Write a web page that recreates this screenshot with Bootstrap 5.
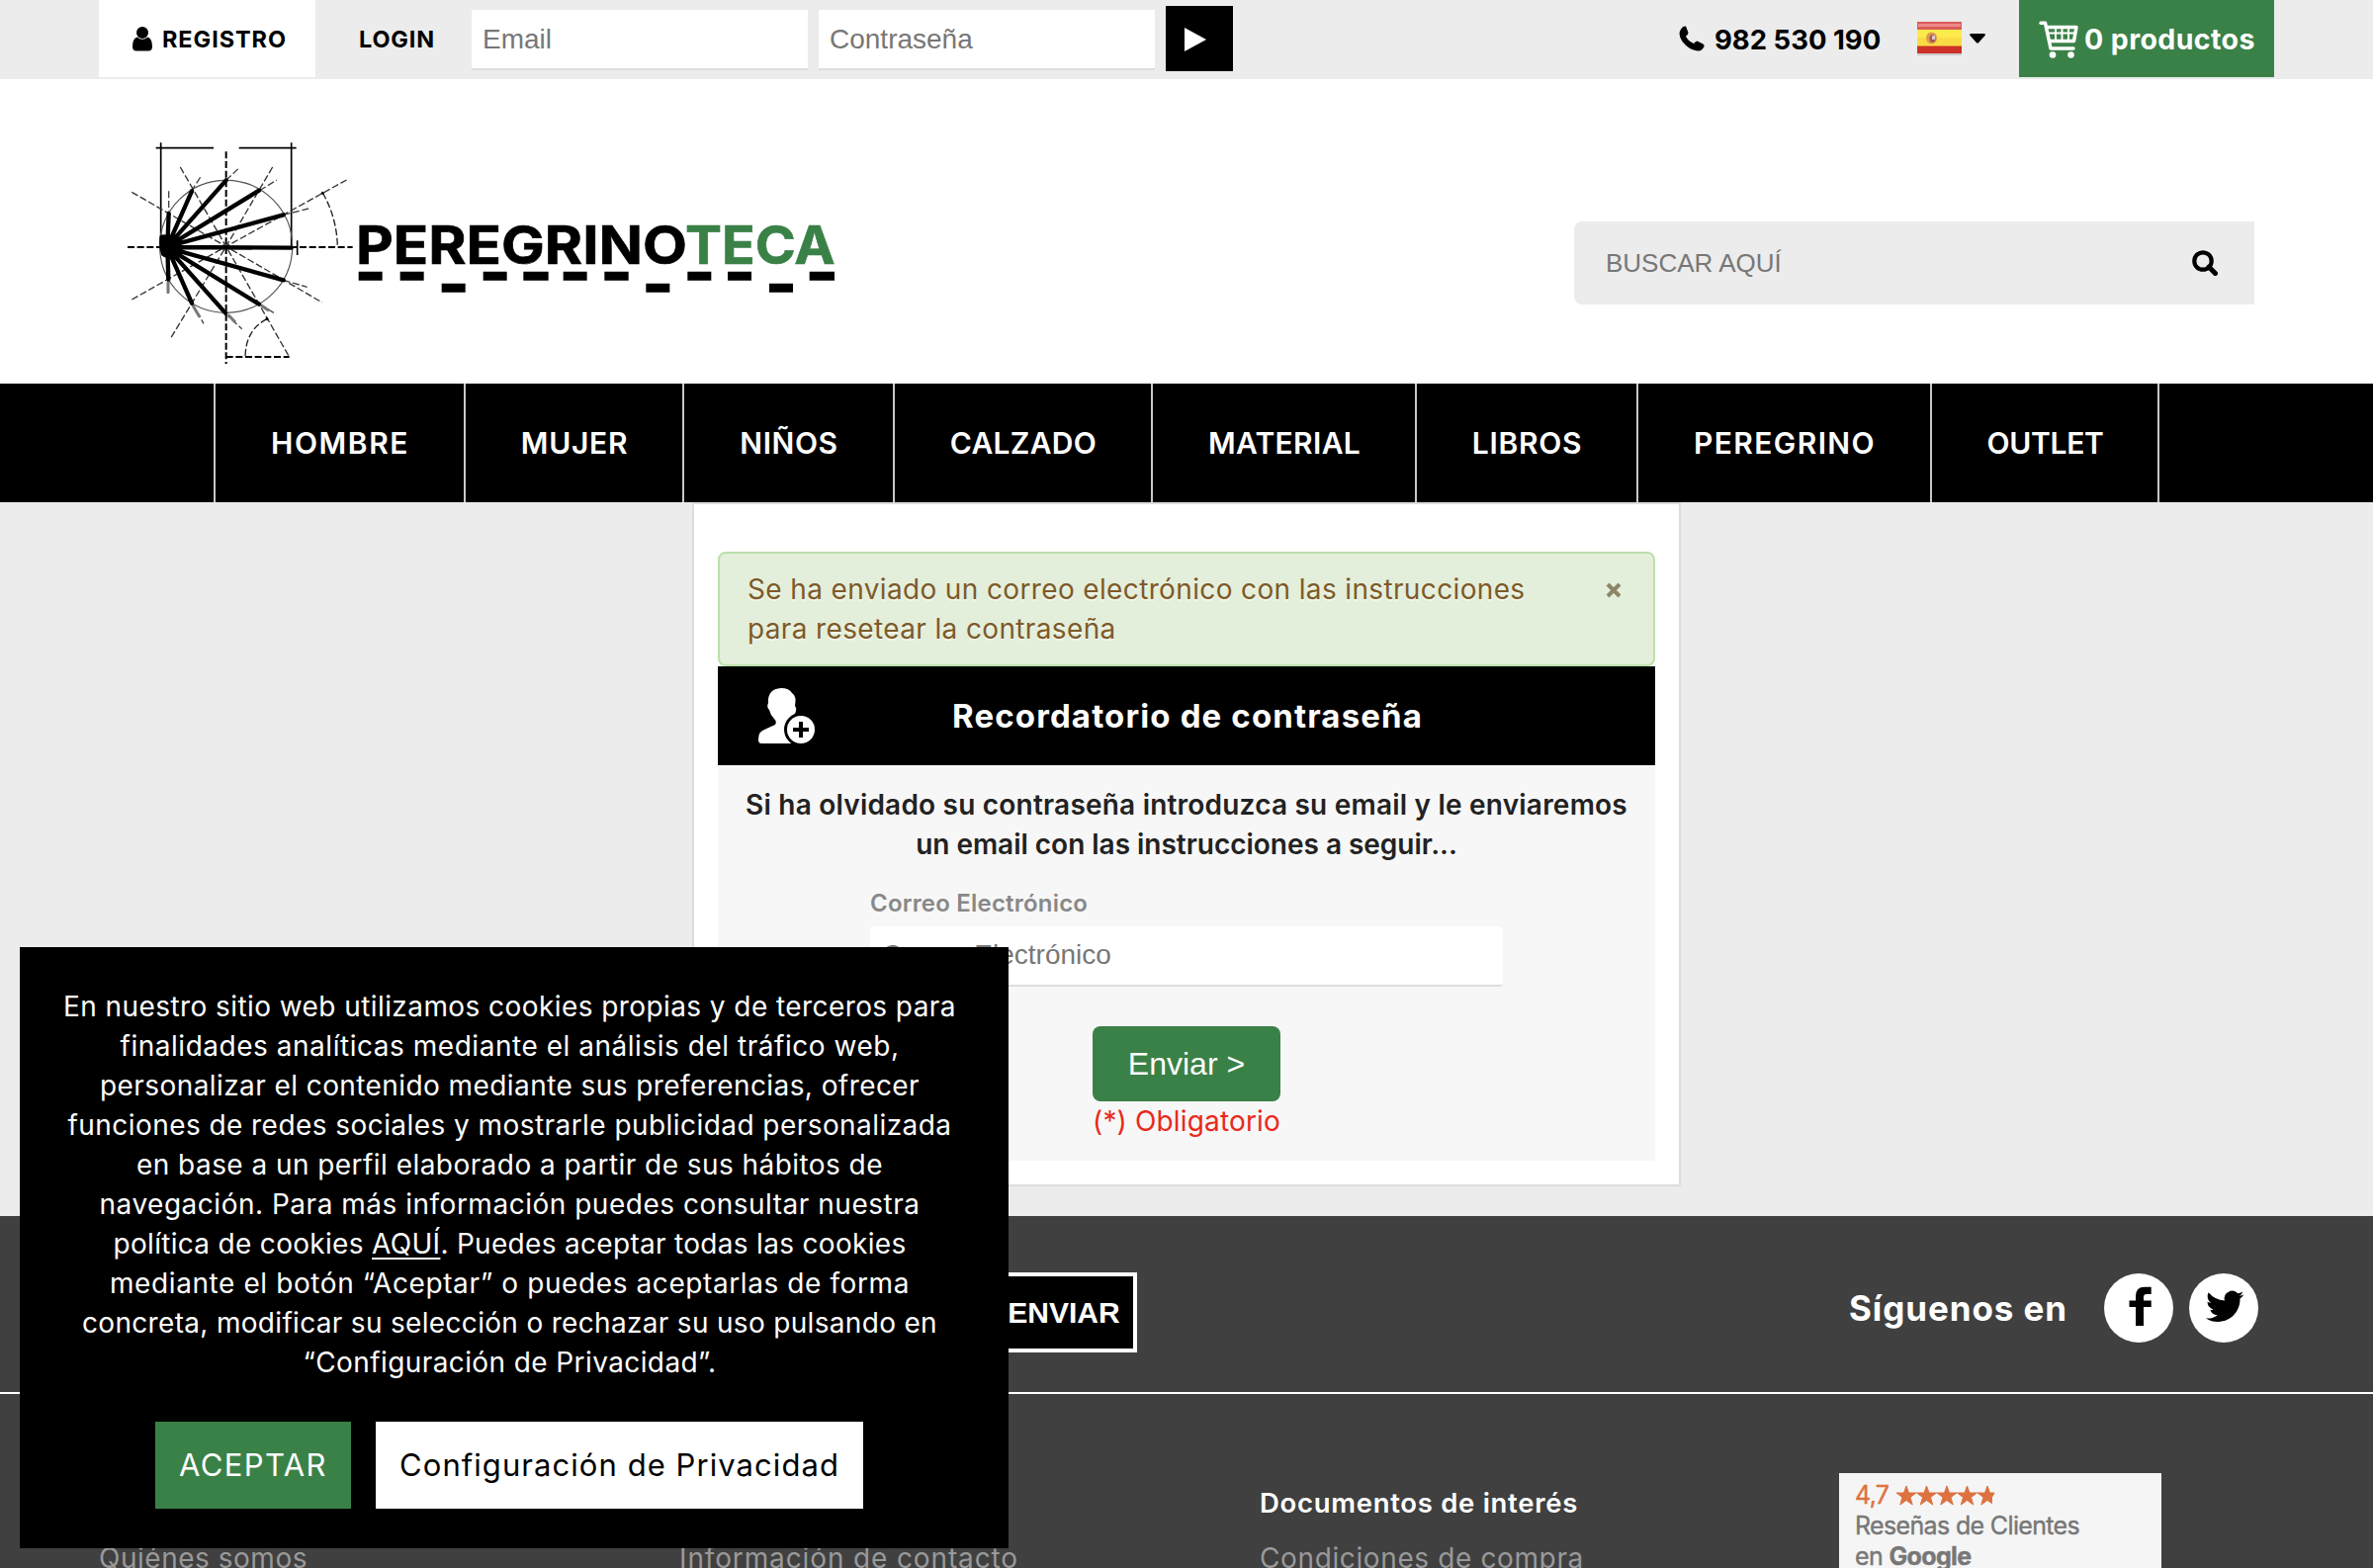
<!DOCTYPE html>
<html lang="es">
<head>
<meta charset="utf-8">
<title>Peregrinoteca</title>
<link href="https://cdn.jsdelivr.net/npm/bootstrap@5.3.0/dist/css/bootstrap.min.css" rel="stylesheet">
<style>
body{font-family:Inter,"Open Sans",sans-serif;font-size:28px;line-height:40px;background:#ececec;color:#000;height:1586px;overflow:hidden}
svg{flex:none;display:block}
.arial{font-family:"Liberation Sans",Arial,sans-serif}
.fit{white-space:nowrap;display:inline-block}
.topbar{height:80px;background:#ececec;padding:0 100px}
.registro{height:78px;width:219px;padding:2px 0 0 34px;font-size:23.5px;font-weight:700;letter-spacing:.93px}
.registro svg{margin:-2px 10px 0 0}
.login{font-size:23.5px;font-weight:700;height:80px;padding-left:44px;width:158px;letter-spacing:.82px}
.flat{height:61px;width:340px;border:0;border-bottom:2px solid #ddd;border-radius:0;font-size:28px;padding:0 11px;background:#fff;margin:10px 11px 0 0}
.form-control::placeholder{color:#777;opacity:1}
.go{width:68px;height:66px;background:#000;border:0;border-radius:0;margin-top:6px;padding:2px 0 0 19px}
.phone{font-size:27.5px;font-weight:700;width:169px;margin:2px 36px 0 10px}
.lang{width:69px;margin-right:34px;gap:8px}
.cart{height:78px;width:258px;background:#3a8147;color:#fff;font-size:28.5px;font-weight:700;padding:2px 0 0 20px;letter-spacing:.4px}
.cart svg{margin-right:6px}
.masthead{height:308px;background:#fff;padding:50px 120px 0 110px}
.searchbox{width:688px;height:84px;background:#ececec;border-radius:8px 0 0 8px;margin-top:94px;padding:0 37px 0 30px}
.searchbox input{background:none;border:0;font-size:26px;padding:0 2px;height:60px}
.mainnav{height:120px;background:#000;padding-left:216px}
.mainnav a{color:#fff;font-weight:600;font-size:30px;height:120px;padding-left:1px;border-right:2px solid #c8c8c8}
.mainnav a:first-child{border-left:2px solid #c8c8c8}
.mainnav a:nth-child(1){width:255px;letter-spacing:1.56px}
.mainnav a:nth-child(2){width:221px;letter-spacing:.7px}
.mainnav a:nth-child(3){width:213px;letter-spacing:.6px}
.mainnav a:nth-child(4){width:261px;letter-spacing:.3px}
.mainnav a:nth-child(5){width:267px;letter-spacing:.34px}
.mainnav a:nth-child(6){width:224px;letter-spacing:.7px}
.mainnav a:nth-child(7){width:297px;letter-spacing:1.39px}
.mainnav a:nth-child(8){width:230px;letter-spacing:-.3px}
.panelcard{width:1000px;height:692px;border:2px solid #ddd;background:#fff;border-radius:0;padding:48px 24px 0}
.notice{height:116px;margin:0;border:2px solid #bcdfab;border-radius:8px;background:#e3efda;color:#7d5a29;padding:16px 30px 0 28px;text-shadow:0 2px 0 rgba(255,255,255,.5);letter-spacing:.36px}
.notice svg{margin:13px 2px 0 0}
.cardtop{height:100px;background:#000;color:#fff;font-size:33px;font-weight:700;letter-spacing:1.14px}
.usericon{margin-left:41px;margin-right:138px}
.formarea{height:400px;background:#f7f7f7;padding:20px 0 0;color:#222;font-weight:600}
.lbl{font-size:24px;color:#888;line-height:30px;margin:25px 0 8px 154px;letter-spacing:.2px}
.mail{width:640px;height:61px;border:0;border-bottom:2px solid #ddd;border-radius:4px;font-size:28px;padding:0 12px 2px;margin-left:154px}
.send{width:190px;height:76px;background:#3a8147;color:#fff;font-size:32px;border:0;border-radius:8px;margin-top:40px;padding:0}
.req{color:#e8291c;font-weight:400;letter-spacing:.16px}
.foot{height:356px;background:#404040;margin-top:30px;color:#fff}
.footbar{height:180px;border-bottom:2px solid #fff;padding:0 116px 0 1001px}
.sub{width:149px;height:81px;margin-top:57px;background:#000;border:4px solid #fff;border-radius:0;color:#fff;font-weight:700;font-size:30px;padding:0 0 0 1px}
.follow{margin:58px 0 0 auto;height:70px;font-size:35px;font-weight:700;letter-spacing:.91px}
.fb{margin:0 16px 0 37px}
.disc{width:70px;height:70px;border-radius:50%;background:#fff}
.footcols{padding:80px 100px 0;display:grid;grid-template-columns:587px 587px 586px 326px}
.footcols h5{font-size:27.5px;line-height:40px;font-weight:600;margin:10px 0 16px;letter-spacing:.7px}
.footcols a{color:#999;text-decoration:none}
.greview{height:96px;overflow:hidden;background:#f5f5f5;color:#777;font-size:25px;line-height:31px;padding:7px 16px;letter-spacing:-.65px;-webkit-text-stroke:.4px}
.score{color:#dd7240}
.cookie{position:fixed;left:20px;top:958px;width:1000px;height:608px;background:#000;color:#fff;padding-top:40px;z-index:20}
.cookie u{text-underline-offset:4px}
.cookie p{margin:0 9px 0 0}
.cookie .btn{height:88px;border-radius:0;font-size:31px;border:0;padding:0}
.acc{width:198px;background:#3a8147!important;color:#fff!important;letter-spacing:1.4px}
.conf{width:493px;background:#fff!important;color:#000!important;letter-spacing:1.06px}
.cookiebtns{margin:40px 0 0 137px;gap:25px}
.k1{letter-spacing:.424px}.k2{letter-spacing:.529px}.k3{letter-spacing:.421px}.k4{letter-spacing:.44px}.k5{letter-spacing:.447px}
.k6{letter-spacing:.51px}.k7{letter-spacing:.308px}.k8{letter-spacing:.592px}.k9{letter-spacing:.318px}.k10{letter-spacing:.4px}
.t1{letter-spacing:.21px}.t2{letter-spacing:-.02px}
.l1{letter-spacing:.52px}.l2{letter-spacing:.87px}.l3{letter-spacing:.62px}
</style>
<script src="https://cdn.jsdelivr.net/npm/bootstrap@5.3.0/dist/js/bootstrap.bundle.min.js"></script>
</head>
<body>
<div class="topbar d-flex align-items-start">
  <a href="#" class="registro bg-white d-flex align-items-center text-black text-decoration-none"><svg width="20" height="25" viewBox="0 0 20 25"><ellipse cx="10" cy="6" rx="6" ry="6"/><path d="M4.500 10.500Q10 15 15.500 10.500Q20 12 20 20Q20 24.500 16 24.500H4Q0 24.500 0 20Q0 12 4.500 10.500Z"/></svg><span>REGISTRO</span></a>
  <div class="login d-flex align-items-center">LOGIN</div>
  <input class="form-control arial flat" placeholder="Email" aria-label="Email">
  <input class="form-control arial flat" placeholder="Contraseña" aria-label="Contraseña">
  <button class="btn go d-flex align-items-center" aria-label="Entrar"><svg width="22" height="24" viewBox="0 0 22 24"><path d="M0 0L22 12L0 24Z" fill="#fff"/></svg></button>
  <div class="d-flex align-items-center ms-auto">
    <svg width="26" height="26" viewBox="0 0 26 26"><path d="M2 3.500Q4 0 7 .5L9.500 7Q9.500 9.500 7 10.500Q9 15.500 15 18Q17 15.500 18.500 15.500L24.500 18.500Q26.500 20 25 22Q22.500 26 19 25.500Q10 24.500 3.500 16Q-1.500 9 2 3.500Z"/></svg>
    <span class="fit phone">982 530 190</span>
    <div class="lang d-flex align-items-center">
      <svg width="45" height="34" viewBox="0 0 45 34"><rect x="0" y="2" width="45" height="32" fill="#bbb" opacity=".7"/><rect width="45" height="32" fill="#cd3027"/><rect width="45" height="9" fill="#dc5b5b"/><rect x="1" y="2" width="43" height="3" fill="#e88"/><rect y="8" width="45" height="16.500" fill="#fdea4b"/><rect y="16" width="45" height="8" fill="#f9dc45"/><ellipse cx="14.500" cy="16.500" rx="5.500" ry="6" fill="#dd9a4c"/><ellipse cx="15.500" cy="17" rx="3" ry="4" fill="#a95a50"/><rect x="15" y="14" width="3" height="4" fill="#dcc5cf"/></svg>
      <svg width="16" height="10" viewBox="0 0 16 10"><path d="M1 0H15Q16.500 .5 15.500 2L9 9.300Q8 10 7 9.300L.5 2Q-.5 .5 1 0Z"/></svg>
    </div>
    <div class="cart d-flex align-items-center"><svg width="40" height="38" viewBox="0 0 40 38" fill="none" stroke="#fff" stroke-width="3.500" stroke-linecap="round" stroke-linejoin="round"><path d="M2 2.200H6.500L12 28H35M7.500 6.500H38L35.500 20.500H11"/><path d="M9 12.500H36M17 7V20M23.500 7V20M30 7V20" stroke-width="2"/><circle cx="14" cy="34.500" r="3.300" fill="#fff" stroke="none"/><circle cx="32.500" cy="34.500" r="3.300" fill="#fff" stroke="none"/></svg><span>0 productos</span></div>
  </div>
</div>
<header class="masthead d-flex justify-content-between align-items-start">
<svg width="740" height="250" viewBox="0 0 2220 750" fill="none" stroke="#000">
  <path d="M158 43V340M554 43V365M143 59H318M395 59H569M572 340V384" stroke-width="5"/>
  <circle cx="356" cy="358" r="201" stroke="#555" stroke-width="3.500"/>
  <g stroke-width="4" stroke-dasharray="21 8">
    <path d="M356 70V714M57 360H740M356 693H548" stroke-width="6"/>
    <path d="M70 193L356 358L648 528M70 519L356 358L727 153M217 117L356 358L546 690M497 117L356 358L188 636" stroke="#333"/>
    <path d="M649 195Q692 270 694 358M480 578Q416 610 414 692" stroke="#222"/>
    <path d="M182 190V250M250 190L278 148M356 157L395 120M458 188L510 156M530 262L606 243M530 460L602 481M458 533L502 560M352 560L404 608M252 530L288 592M180 450V505" stroke="#444"/>
  </g>
  <g stroke-width="13" stroke="#000" stroke-linecap="round">
    <path d="M178 358L182 258M178 358L252 190M178 358L356 157M178 358L456 188M178 358L530 262M178 360L554 362M178 362L530 460M178 362L456 533M178 362L354 560M178 362L252 530M178 362L181 458"/>
  </g>
  <g stroke="#777" stroke-width="9"><path d="M180 465V500M255 537L276 572M362 565L384 588M462 536L486 553"/></g>
  <path d="M155 325Q175 315 192 335L206 360L192 385Q180 402 160 385Q150 355 155 325Z" fill="#000" stroke="none"/>
  <circle cx="649" cy="196" r="4" fill="#000"/><circle cx="480" cy="578" r="4" fill="#000"/>
  <g stroke="none" font-family="Inter" font-weight="700" font-size="160">
    <text x="750" y="412" textLength="1005" lengthAdjust="spacingAndGlyphs" fill="#000" stroke="#000" stroke-width="2">PEREGRINO</text>
    <text x="1749" y="412" textLength="455" lengthAdjust="spacingAndGlyphs" fill="#3a8147" stroke="#3a8147" stroke-width="2">TECA</text>
  </g>
  <path d="M758 448h72m54 0h72m180 0h72m50 0h76m45 0h72m53 0h73m179 0h72m50 0h72m176 0h76M1010 484h72m548 0h72m302 0h72" stroke-width="27"/>
</svg>
<div class="searchbox d-flex align-items-center justify-content-between"><input class="form-control arial w-50 shadow-none" placeholder="BUSCAR AQUÍ" aria-label="Buscar"><svg width="26" height="26" viewBox="0 0 26 26" fill="none" stroke="#000" stroke-width="4.200"><circle cx="11" cy="11" r="8.700"/><path d="M17 17L23.500 23.500" stroke-width="5" stroke-linecap="round"/></svg></div></header>
<nav class="mainnav d-flex">
<a href="#" class="d-flex align-items-center justify-content-center text-decoration-none">HOMBRE</a>
<a href="#" class="d-flex align-items-center justify-content-center text-decoration-none">MUJER</a>
<a href="#" class="d-flex align-items-center justify-content-center text-decoration-none">NIÑOS</a>
<a href="#" class="d-flex align-items-center justify-content-center text-decoration-none">CALZADO</a>
<a href="#" class="d-flex align-items-center justify-content-center text-decoration-none">MATERIAL</a>
<a href="#" class="d-flex align-items-center justify-content-center text-decoration-none">LIBROS</a>
<a href="#" class="d-flex align-items-center justify-content-center text-decoration-none">PEREGRINO</a>
<a href="#" class="d-flex align-items-center justify-content-center text-decoration-none">OUTLET</a>
</nav>
<main class="d-flex justify-content-center"><div class="panelcard">
<div class="notice d-flex justify-content-between align-items-start"><div><span class="fit">Se ha enviado un correo electrónico con las instrucciones</span><br><span class="fit">para resetear la contraseña</span></div>
<svg width="16" height="16" viewBox="0 0 16 16"><path d="M2 2L14 14M14 2L2 14" stroke="#8c8569" stroke-width="4"/></svg></div>
<div class="cardtop d-flex align-items-center"><svg class="usericon" width="58" height="56" viewBox="0 0 58 56"><path d="M23 0Q31 0 34 5Q39 8 37 18Q40 22 36 27Q35 31 31 34V38L38 43L33 56H3Q0 56 0 52Q0 44 6 42L17 37Q19 34 16 31Q12 27 11 22Q8 19 10 15Q9 1 23 0Z" fill="#fff"/><circle cx="43" cy="42" r="17" fill="#000"/><circle cx="43" cy="42" r="14" fill="#fff"/><path d="M43 34V50M35 42H51" stroke="#000" stroke-width="4"/></svg><span class="fit">Recordatorio de contraseña</span></div>
<div class="formarea">
<div class="text-center"><span class="fit t1">Si ha olvidado su contraseña introduzca su email y le enviaremos</span><br><span class="fit t2">un email con las instrucciones a seguir...</span></div>
<label class="lbl d-block" for="mail">Correo Electrónico</label>
<input id="mail" class="form-control arial mail" placeholder="Correo Electrónico">
<div class="text-center"><button class="btn arial send">Enviar &gt;</button><div class="req">(*) Obligatorio</div></div></div>
</div></main>
<footer class="foot"><div class="footbar d-flex align-items-start"><button class="btn arial sub">ENVIAR</button><div class="follow d-flex align-items-center"><span class="fit">Síguenos en</span>
<a href="#" class="disc fb" aria-label="Facebook"><svg width="70" height="70" viewBox="0 0 70 70"><path d="M32 53V34H25.500V27.500H32V23Q32 13.700 41 13.700H47.700V21H43Q40 21 40 24V27.500H47.700V34H40V53Z"/></svg></a>
<a href="#" class="disc" aria-label="Twitter"><svg width="70" height="70" viewBox="0 0 70 70"><path transform="translate(17 13) scale(2.400)" d="M5.026 15c6.038 0 9.341-5.003 9.341-9.334 0-.14 0-.282-.006-.422A6.685 6.685 0 0 0 16 3.542a6.658 6.658 0 0 1-1.889.518 3.301 3.301 0 0 0 1.447-1.817 6.533 6.533 0 0 1-2.087.793A3.286 3.286 0 0 0 7.875 6.030a9.325 9.325 0 0 1-6.767-3.429 3.289 3.289 0 0 0 1.018 4.382A3.323 3.323 0 0 1 .64 6.575v.045a3.288 3.288 0 0 0 2.632 3.218 3.203 3.203 0 0 1-.865.115 3.230 3.230 0 0 1-.614-.057 3.283 3.283 0 0 0 3.067 2.277A6.588 6.588 0 0 1 .78 13.580a6.320 6.320 0 0 1-.78-.045A9.344 9.344 0 0 0 5.026 15z"/></svg></a></div></div>
<div class="footcols"><div><h5>&nbsp;</h5><a href="#" class="fit l1">Quiénes somos</a></div><div><h5>&nbsp;</h5><a href="#" class="fit l2">Información de contacto</a></div><div><h5>Documentos de interés</h5><a href="#" class="fit l3">Condiciones de compra</a></div>
<div class="greview"><div class="score d-flex align-items-center"><span>4,7</span><svg class="ms-2" width="100" height="20" viewBox="0 0 100 20" fill="#dd7240" stroke="#dd7240" stroke-width="1"><defs><path id="st" d="M10 0L12.500 7H20L14 11.500L16.200 19L10 14.500L3.800 19L6 11.500L0 7H7.500Z"/></defs><use href="#st"/><use href="#st" x="20.500"/><use href="#st" x="41"/><use href="#st" x="61.500"/><path transform="translate(82)" d="M10 0L12.500 7H17L14.500 11.500V17.500L10 14.500L3.800 19L6 11.500L0 7H7.500Z"/></svg></div><span class="fit">Reseñas de Clientes</span><br><span class="fit">en <b>Google</b></span></div></div>
</footer>
<section class="cookie"><p class="text-center">
<span class="fit k1">En nuestro sitio web utilizamos cookies propias y de terceros para</span><br>
<span class="fit k2">finalidades analíticas mediante el análisis del tráfico web,</span><br>
<span class="fit k3">personalizar el contenido mediante sus preferencias, ofrecer</span><br>
<span class="fit k4">funciones de redes sociales y mostrarle publicidad personalizada</span><br>
<span class="fit k5">en base a un perfil elaborado a partir de sus hábitos de</span><br>
<span class="fit k6">navegación. Para más información puedes consultar nuestra</span><br>
<span class="fit k7">política de cookies <u>AQUÍ</u>. Puedes aceptar todas las cookies</span><br>
<span class="fit k8">mediante el botón “Aceptar” o puedes aceptarlas de forma</span><br>
<span class="fit k9">concreta, modificar su selección o rechazar su uso pulsando en</span><br>
<span class="fit k10">“Configuración de Privacidad”.</span></p>
<div class="cookiebtns d-flex"><button class="btn acc">ACEPTAR</button><button class="btn conf">Configuración de Privacidad</button></div>
</section>
</body></html>
